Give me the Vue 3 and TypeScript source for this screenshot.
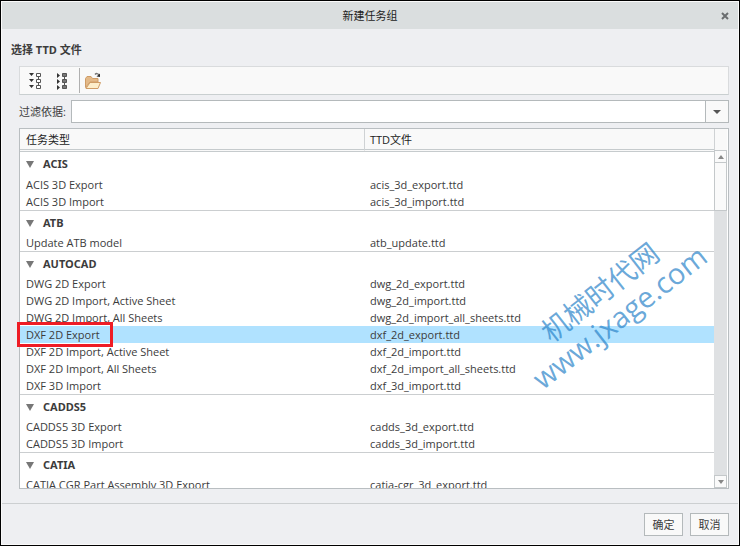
<script setup lang="ts">
import { ref } from 'vue'

interface Task {
  name: string
  file: string
}
interface Group {
  title: string
  tasks: Task[]
}

const groups: Group[] = [
  {
    title: 'ACIS',
    tasks: [
      { name: 'ACIS 3D Export', file: 'acis_3d_export.ttd' },
      { name: 'ACIS 3D Import', file: 'acis_3d_import.ttd' },
    ],
  },
  {
    title: 'ATB',
    tasks: [{ name: 'Update ATB model', file: 'atb_update.ttd' }],
  },
  {
    title: 'AUTOCAD',
    tasks: [
      { name: 'DWG 2D Export', file: 'dwg_2d_export.ttd' },
      { name: 'DWG 2D Import, Active Sheet', file: 'dwg_2d_import.ttd' },
      { name: 'DWG 2D Import, All Sheets', file: 'dwg_2d_import_all_sheets.ttd' },
      { name: 'DXF 2D Export', file: 'dxf_2d_export.ttd' },
      { name: 'DXF 2D Import, Active Sheet', file: 'dxf_2d_import.ttd' },
      { name: 'DXF 2D Import, All Sheets', file: 'dxf_2d_import_all_sheets.ttd' },
      { name: 'DXF 3D Import', file: 'dxf_3d_import.ttd' },
    ],
  },
  {
    title: 'CADDS5',
    tasks: [
      { name: 'CADDS5 3D Export', file: 'cadds_3d_export.ttd' },
      { name: 'CADDS5 3D Import', file: 'cadds_3d_import.ttd' },
    ],
  },
  {
    title: 'CATIA',
    tasks: [{ name: 'CATIA CGR Part Assembly 3D Export', file: 'catia-cgr_3d_export.ttd' }],
  },
]

const filter = ref('')
const selected = ref('DXF 2D Export')
</script>

<template>
  <div class="dialog">
    <header class="titlebar">
      <h1>新建任务组</h1>
      <button class="close" type="button" aria-label="关闭">
        <svg width="8" height="8" viewBox="0 0 8 8"><path d="M1 1L7 7M7 1L1 7" stroke="#6a6d6f" stroke-width="2" /></svg>
      </button>
    </header>

    <main class="content">
      <h2>选择 TTD 文件</h2>
      <div class="panel">
        <div class="toolbar">
          <button class="tool" type="button" aria-label="全部展开">
            <svg width="14" height="18" viewBox="0 0 14 18">
              <g fill="#333"><path d="M0 1h5L2.500 4zM0 7h5L2.500 10zM0 13h5L2.500 16z" /></g>
              <g fill="#fff" stroke="#555"><path d="M7.500 1.500h4v3h-4zM7.500 7.500h4v3h-4zM7.500 13.500h4v3h-4zM9.500 5v2M9.500 11v2" /></g>
            </svg>
          </button>
          <button class="tool" type="button" aria-label="全部折叠">
            <svg width="14" height="18" viewBox="0 0 14 18">
              <g fill="#333"><path d="M1 1v5L4 3.500zM1 7v5L4 9.500zM1 13v5L4 15.500z" /></g>
              <g fill="#777" stroke="#555"><path d="M6.500 1.500h4v3h-4zM6.500 7.500h4v3h-4zM6.500 13.500h4v3h-4zM8.500 5v2M8.500 11v2" /></g>
            </svg>
          </button>
          <span class="divider"></span>
          <button class="tool folder" type="button" aria-label="打开">
            <svg width="18" height="18" viewBox="0 0 18 18">
              <path d="M1.500 15.500V6.500L3 4.500H7L8.500 6.500H14V10H6z" fill="#e3b988" stroke="#cf9c66" />
              <path d="M2 16.500L6 10.500H16.500L14 16.500z" fill="#fdeecb" stroke="#cf9c66" />
              <path d="M11 2.500Q13 .5 15 3" fill="none" stroke="#777" stroke-width="1.500" />
              <path d="M12.500 4.500L16 1.500V5z" fill="#333" />
            </svg>
          </button>
        </div>

        <div class="filter">
          <label for="filter">过滤依据:</label>
          <input id="filter" v-model="filter" type="text" />
          <button type="button" aria-label="过滤选项">
            <svg width="8" height="4" viewBox="0 0 8 4"><path d="M0 0h8L4 4z" fill="#555" /></svg>
          </button>
        </div>

        <div class="list">
          <div class="rows">
            <table>
              <colgroup>
                <col class="col-type" />
                <col />
              </colgroup>
              <thead>
                <tr>
                  <th scope="col">任务类型</th>
                  <th scope="col">TTD文件</th>
                </tr>
              </thead>
              <tbody v-for="group in groups" :key="group.title">
                <tr class="group">
                  <th colspan="2" scope="rowgroup">
                    <svg width="8" height="7" viewBox="0 0 8 7"><path d="M0 0h8L4 7z" fill="#777" /></svg>{{ group.title }}
                  </th>
                </tr>
                <tr
                  v-for="task in group.tasks"
                  :key="task.name"
                  :class="{ selected: task.name === selected }"
                  @click="selected = task.name"
                >
                  <td>{{ task.name }}</td>
                  <td>{{ task.file }}</td>
                </tr>
              </tbody>
            </table>
          </div>
          <div class="scroll">
            <div class="corner"></div>
            <button type="button" aria-label="向上滚动">
              <svg width="6" height="4" viewBox="0 0 6 4"><path d="M0 4h6L3 0z" fill="#888" /></svg>
            </button>
            <div class="track"><div class="thumb"></div></div>
            <button type="button" aria-label="向下滚动">
              <svg width="6" height="4" viewBox="0 0 6 4"><path d="M0 0h6L3 4z" fill="#888" /></svg>
            </button>
          </div>
          <div class="marker"></div>
          <div class="watermark">
            <span class="cn">机械时代网</span>
            <span class="url">www.jxage.com</span>
          </div>
        </div>
      </div>
    </main>

    <footer class="actions">
      <button type="button">确定</button>
      <button type="button">取消</button>
    </footer>
  </div>
</template>

<style>
body {
  margin: 0;
}
</style>

<style scoped>
* {
  box-sizing: border-box;
}
.dialog {
  display: flex;
  flex-direction: column;
  height: 100vh;
  border: 1px solid #000;
  background: #eeeff2;
  box-shadow: inset 0 0 0 1px #fafafa;
  color: #3c3c3c;
  font: 11px/17px "Open Sans", "Noto Sans CJK SC", sans-serif;
}
button {
  display: flex;
  align-items: center;
  justify-content: center;
  padding: 0;
  border: 0;
  border-radius: 0;
  background: none;
  color: inherit;
  font: inherit;
}
svg {
  display: block;
  flex: none;
}
.titlebar {
  display: flex;
  align-items: center;
  height: 27px;
  margin: 1px 1px 0;
  padding: 0 8px 0 18px;
  background: #dadedf;
}
h1 {
  flex: 1;
  margin: 0;
  color: #222;
  font-size: 11px;
  font-weight: 400;
  text-align: center;
}
.close {
  width: 10px;
  height: 16px;
}
.content {
  display: flex;
  flex: 1;
  flex-direction: column;
  min-height: 0;
  padding: 12px 10px 14px;
}
h2 {
  margin: 0 0 8px;
  font-family: "Noto Sans", "Noto Sans CJK SC", sans-serif;
  font-size: 11px;
  font-weight: 700;
}
.panel {
  display: flex;
  flex: 1;
  flex-direction: column;
  gap: 5px;
  min-height: 0;
  margin-left: 8px;
}
.toolbar {
  display: flex;
  align-items: center;
  height: 29px;
  padding-left: 9px;
  border: 1px solid #d9dbdd;
  border-bottom-color: #c9cfd0;
  background: #f9f9f9;
}
.tool {
  width: 14px;
  height: 22px;
}
.tool + .tool {
  margin-left: 13px;
}
.divider {
  width: 1px;
  height: 25px;
  margin: 0 4px 0 9px;
  background: #b0b0b0;
}
.folder {
  width: 18px;
}
.filter {
  display: flex;
  height: 23px;
}
.filter label {
  width: 52px;
  line-height: 23px;
}
.filter input {
  flex: 1;
  min-width: 0;
  padding: 0 4px;
  border: 1px solid #b4b9bb;
  border-radius: 0;
  background: #fff;
  font: inherit;
}
.filter button {
  width: 23px;
  border: 1px solid #b4b9bb;
  border-left: 0;
  background: #f9f9f9;
}
.list {
  position: relative;
  display: flex;
  flex: 1;
  min-height: 0;
  padding-right: 1px;
  border: 1px solid #b9bec1;
  background: #fff;
}
.rows {
  flex: 1;
  min-width: 0;
  overflow: hidden;
}
table {
  width: 100%;
  border-collapse: separate;
  border-spacing: 0;
  table-layout: fixed;
}
.col-type {
  width: 344px;
}
thead th {
  height: 23px;
  padding: 0 6px;
  border-bottom: 3px double #c6cbcd;
  background: #f9f9f9;
  color: #222;
  font-weight: 400;
  text-align: left;
}
thead th + th {
  padding-left: 5px;
  border-left: 1px solid #cfd2d4;
}
.group th {
  height: 24px;
  padding: 0 6px;
  border-top: 1px solid #cbced0;
  font-family: "Noto Sans", sans-serif;
  font-weight: 700;
  text-align: left;
}
thead + tbody .group th {
  padding-bottom: 2px;
  border-top: 0;
}
.group svg {
  display: inline-block;
  margin-right: 9px;
}
td {
  height: 17px;
  padding: 0 6px;
  white-space: nowrap;
}
.selected td {
  background: #b0e2ff;
}
.scroll {
  display: flex;
  flex-direction: column;
  width: 13px;
  background: #dfe1e3;
}
.corner {
  height: 21px;
  border-left: 1px solid #cfd2d4;
  background: #f9f9f9;
}
.scroll button {
  height: 13px;
  border: 1px solid #c4c8ca;
  background: #fafafa;
}
.track {
  flex: 1;
}
.thumb {
  height: 48px;
  border: 1px solid #c4c8ca;
  border-top: 0;
  background: #fafafa;
}
.marker {
  position: absolute;
  top: 193px;
  left: -3px;
  width: 96px;
  height: 25px;
  border: 3px solid #ee1c25;
}
.watermark {
  position: absolute;
  top: 144px;
  right: 10px;
  display: flex;
  flex-direction: column;
  align-items: center;
  width: 216px;
  color: rgb(41 130 200 / 70%);
  pointer-events: none;
  transform: rotate(-38deg);
}
.cn {
  font-size: 28px;
  line-height: 30px;
}
.url {
  font-size: 29px;
  line-height: 34px;
}
.actions {
  display: flex;
  justify-content: flex-end;
  gap: 7px;
  margin: 0 1px;
  padding: 9px 9px;
  border-top: 1px solid #cccfd1;
}
.actions button {
  width: 39px;
  height: 23px;
  border: 1px solid #b4b9bb;
  background: #f9f9f9;
}
</style>
